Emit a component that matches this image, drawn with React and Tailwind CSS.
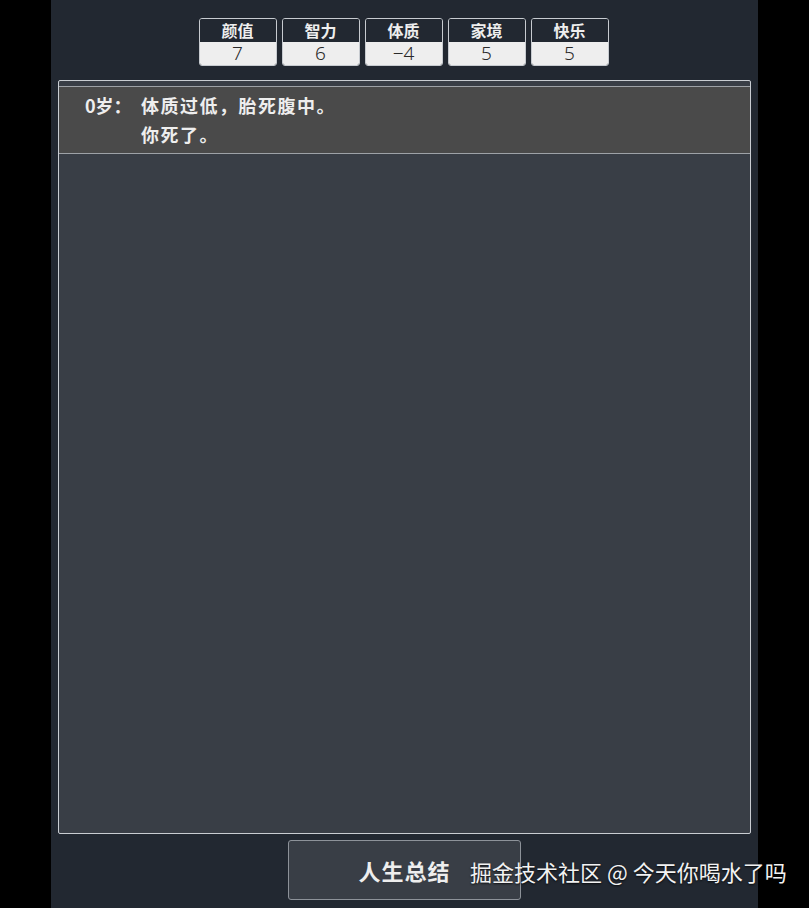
import React from "react";

const stats = [
  ["颜值", "7"],
  ["智力", "6"],
  ["体质", "-4"],
  ["家境", "5"],
  ["快乐", "5"],
];

const cjk = { fontFamily: '"Noto Sans CJK SC", "Noto Sans", sans-serif' };

export default function App() {
  return (
    <div className="relative w-full h-[908px] bg-black flex justify-center overflow-hidden" style={cjk}>
      <div className="w-[707px] h-full bg-[#222831] flex flex-col items-center pt-[18px]">
        <div className="flex gap-[5px] -translate-x-[1px]">
          {stats.map(([k, v]) => (
            <div key={k} className="w-[78px] h-[48px] border border-[#c7cbd0] rounded-[3px] overflow-hidden flex flex-col">
              <div className="h-[23px] bg-[#222831] text-[#eeeeee] text-[16px] font-bold leading-[23px] text-center">{k}</div>
              <div className="flex-1 bg-[#eeeeee] text-[#2a2a2a] text-[19px] font-light leading-[23px] text-center" style={{ fontFamily: '"Noto Sans", sans-serif' }}>{v === "-4" ? "−4" : v}</div>
            </div>
          ))}
        </div>
        <div className="mt-[14px] w-[693px] h-[754px] border border-[#c9cdd2] rounded-[2px] bg-[#393e46] pt-[5px]">
          <div className="border-t border-b border-[#9ea2a7] bg-[#4a4a4a] h-[68px] pt-[4px] pl-[26px] flex text-[#eeeeee] text-[18px] font-bold leading-[29px]">
            <div className="w-[56px]">0岁：</div>
            <div className="flex flex-col">
              <div className="tracking-[1.5px]">体质过低，胎死腹中。</div>
              <div className="tracking-[1.5px]">你死了。</div>
            </div>
          </div>
        </div>
        <div className="mt-[6px] w-[233px] h-[60px] border border-[#8d9299] rounded-[3px] bg-[#393e46] flex items-center justify-center text-[#eeeeee] text-[22px] font-bold tracking-[1px]">
          人生总结
        </div>
      </div>
      <div
        className="absolute left-[470px] top-[855px] text-[22px] leading-[32px] text-[#f2f2f2] whitespace-nowrap"
        style={{ textShadow: "0 1px 2px rgba(0,0,0,0.8)" }}
      >
        掘金技术社区 @ 今天你喝水了吗
      </div>
    </div>
  );
}
